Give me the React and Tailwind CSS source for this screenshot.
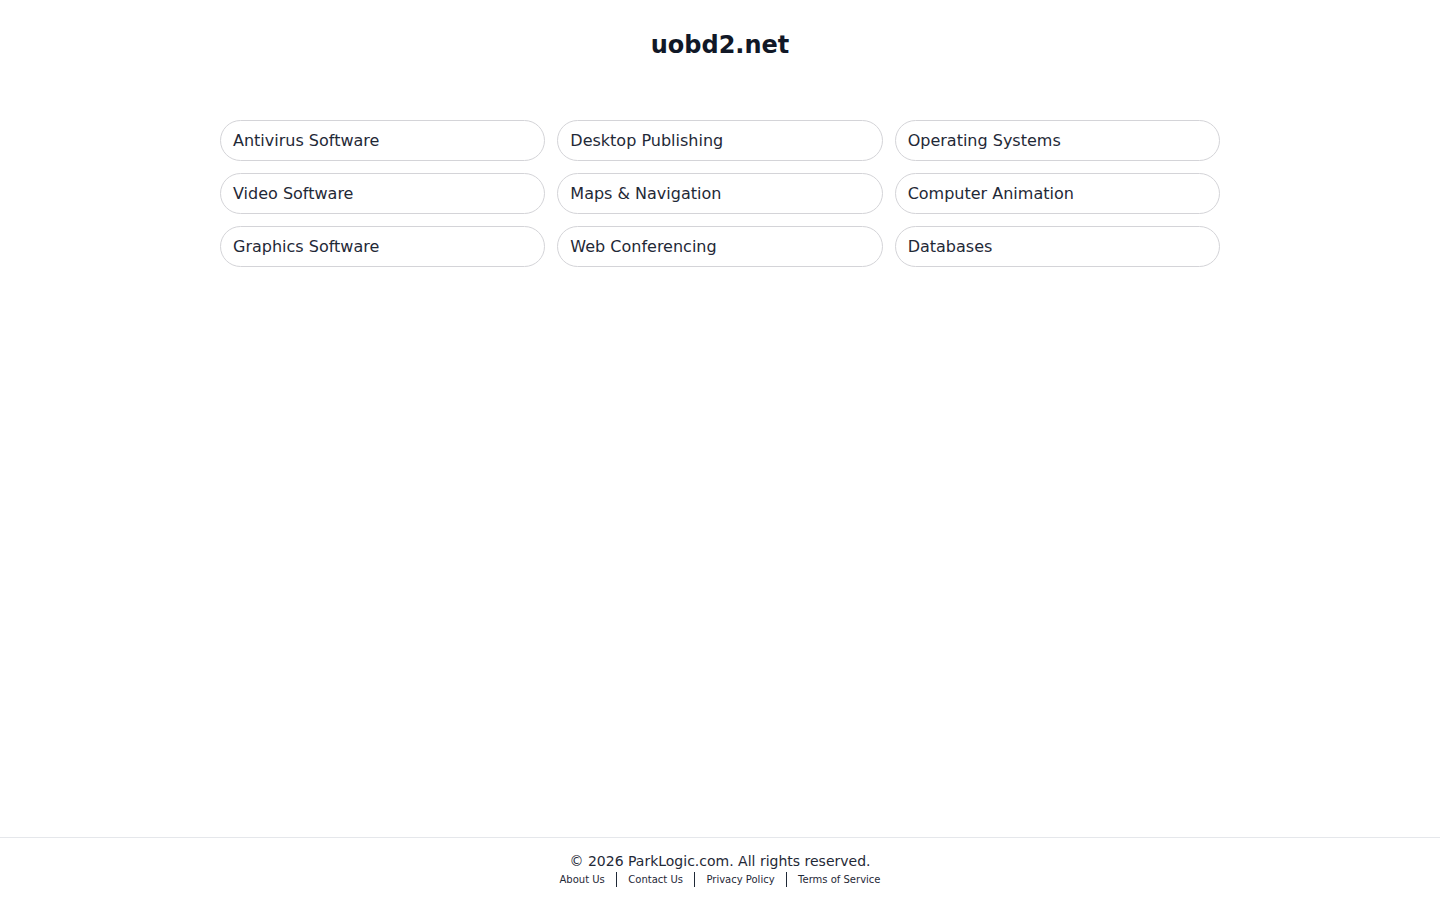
import React from 'react';

const topics = [
    "Antivirus Software",
    "Desktop Publishing",
    "Operating Systems",
    "Video Software",
    "Maps & Navigation",
    "Computer Animation",
    "Graphics Software",
    "Web Conferencing",
    "Databases",
];

const links = ["About Us", "Contact Us", "Privacy Policy", "Terms of Service"];

const App = () => (
    <div className="min-h-screen flex flex-col bg-white text-[#1f2937]" style={{ fontFamily: '"DejaVu Sans", sans-serif' }}>
        <main className="flex-1">
            <h1 className="pt-[29px] text-center text-2xl leading-8 font-bold text-[#111827]">uobd2.net</h1>

            <div className="mx-auto mt-[59px] grid w-[1000px] grid-cols-3 gap-x-3 gap-y-3">
                {topics.map((topic) => (
                    <a
                        key={topic}
                        href="#"
                        className="flex h-[41px] items-center rounded-full border border-[#d4d4d8] px-[12px] text-base text-[#1f2937]"
                    >
                        {topic}
                    </a>
                ))}
            </div>
        </main>

        <footer className="border-t border-[#e5e7eb] pt-[13px] pb-[13px] text-center">
            <p className="text-sm leading-5 text-[#1f2937]">© 2026 ParkLogic.com. All rights reserved.</p>
            <div className="flex h-4 items-center justify-center text-[10px] text-[#1f2937]">
                {links.map((link, i) => (
                    <React.Fragment key={link}>
                        {i > 0 && <span className="mx-[11px] h-[15px] w-[1.5px] bg-[#1f2937]"></span>}
                        <a href="#">{link}</a>
                    </React.Fragment>
                ))}
            </div>
        </footer>
    </div>
);

export default App;
